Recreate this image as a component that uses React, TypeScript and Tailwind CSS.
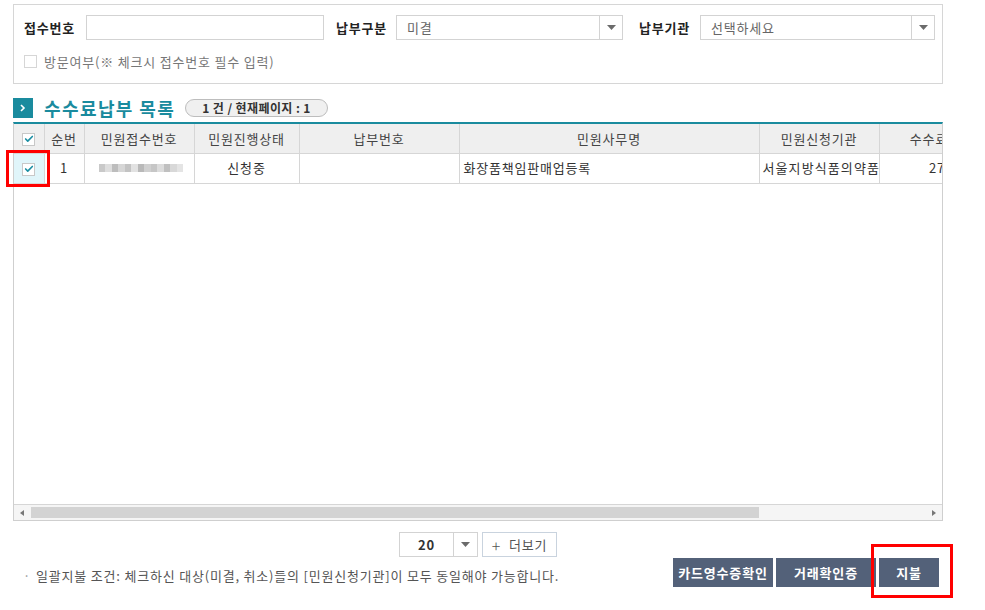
import { Check } from "lucide-react";

const font = { fontFamily: '"Noto Sans CJK KR", "Noto Sans", sans-serif' };

function Caret() {
  return (
    <svg width="9" height="5" viewBox="0 0 9 5">
      <path d="M0 0h9L4.5 5z" fill="#6b6b6b" />
    </svg>
  );
}

function SelectBox({ value, width, arrow }: { value: string; width: string; arrow: string }) {
  return (
    <div className={`flex h-[25px] ${width} border border-[#d3d3d3] bg-white`}>
      <div className="flex flex-1 items-center pl-[10px] text-[13px] text-[#666]">{value}</div>
      <div className={`flex ${arrow} items-center justify-center border-l border-[#d3d3d3]`}>
        <Caret />
      </div>
    </div>
  );
}

function CheckBox({ checked }: { checked?: boolean }) {
  return (
    <span className="inline-flex h-[13px] w-[13px] items-center justify-center border border-[#c8c8c8] bg-white">
      {checked && <Check size={10} strokeWidth={4} className="text-[#1b8fa3]" />}
    </span>
  );
}

function BlurredNumber() {
  const shades = ["#c9c9c9", "#dedede", "#bdbdbd", "#d6d6d6", "#c3c3c3", "#e2e2e2", "#b9b9b9", "#d0d0d0", "#c6c6c6", "#dcdcdc", "#c0c0c0", "#d8d8d8", "#e4e4e4"];
  return (
    <div className="flex h-[8px] blur-[0.6px]">
      {shades.map((c, i) => (
        <span key={i} className="h-full w-[6.5px]" style={{ background: c }} />
      ))}
    </div>
  );
}

const headers = [
  { t: "", w: "w-[30px]" },
  { t: "순번", w: "w-[40px]" },
  { t: "민원접수번호", w: "w-[110px]" },
  { t: "민원진행상태", w: "w-[105px]" },
  { t: "납부번호", w: "w-[160px]" },
  { t: "민원사무명", w: "w-[300px]" },
  { t: "민원신청기관", w: "w-[120px]" },
  { t: "수수료", w: "w-[100px]" },
  { t: "납부금액", w: "w-[110px]" },
  { t: "납부일자", w: "w-[110px]" },
];

export default function App() {
  return (
    <div className="relative h-[610px] w-[985px] overflow-hidden bg-white tracking-[0.8px] text-[#333]" style={font}>
      {/* 검색 영역 */}
      <div className="ml-[13px] mt-[4px] h-[80px] w-[930px] border border-[#d6d6d6] pl-[10px] pt-[10px]">
        <div className="flex items-center">
          <span className="w-[52px] whitespace-nowrap text-[13px] font-bold text-[#222]">접수번호</span>
          <div className="ml-[10px] h-[25px] w-[238px] border border-[#d3d3d3]" />
          <span className="ml-[12px] w-[50px] whitespace-nowrap text-[13px] font-bold text-[#222]">납부구분</span>
          <div className="ml-[10px]">
            <SelectBox value="미결" width="w-[227px]" arrow="w-[23px]" />
          </div>
          <span className="ml-[16px] w-[51px] whitespace-nowrap text-[13px] font-bold text-[#222]">납부기관</span>
          <div className="ml-[10px]">
            <SelectBox value="선택하세요" width="w-[235px]" arrow="w-[23px]" />
          </div>
        </div>
        <div className="mt-[12px] flex items-center">
          <span className="h-[13px] w-[13px] border border-[#d6d6d6] bg-white" />
          <span className="ml-[7px] text-[13px] text-[#777]">방문여부(※ 체크시 접수번호 필수 입력)</span>
        </div>
      </div>

      {/* 타이틀 */}
      <div className="ml-[13px] mt-[14px] flex items-center">
        <span className="flex h-[20px] w-[20px] items-center justify-center bg-[#1a8b9e]">
          <svg width="6" height="8" viewBox="0 0 6 8">
            <path d="M1 1l3 3-3 3" stroke="white" strokeWidth="1.6" fill="none" />
          </svg>
        </span>
        <span className="ml-[11px] text-[18px] font-bold leading-[20px] tracking-[1.4px] text-[#1a8b9e]">수수료납부 목록</span>
        <span className="ml-[10px] flex h-[18px] items-center rounded-full border border-[#bdbdbd] bg-[#f0f0f0] px-[16px] text-[12px] font-bold tracking-[0.4px] text-[#333]">
          1 건 / 현재페이지 : 1
        </span>
      </div>

      {/* 목록 */}
      <div className="ml-[13px] mt-[4px] flex h-[399px] w-[930px] flex-col border-x border-b border-[#cfcfcf] border-t-2 border-t-[#1a8b9e]">
        <div className="flex-1 overflow-hidden">
          <table className="table-fixed border-collapse text-[13px]" style={{ width: 1085 }}>
            <thead>
              <tr className="h-[29px] bg-[#efefef] text-[#444]">
                {headers.map((h, i) => (
                  <th key={i} className={`${h.w} whitespace-nowrap border-b border-r border-[#d6d6d6] font-normal`}>
                    {i === 0 ? (
                      <div className="flex justify-center pt-[2px]">
                        <CheckBox checked />
                      </div>
                    ) : (
                      h.t
                    )}
                  </th>
                ))}
              </tr>
            </thead>
            <tbody>
              <tr className="h-[30px]">
                <td className="border-b border-r border-[#d6d6d6] bg-[#e0f5fa]">
                  <div className="flex justify-center pt-[2px]">
                    <CheckBox checked />
                  </div>
                </td>
                <td className="border-b border-r border-[#d6d6d6] text-center">1</td>
                <td className="border-b border-r border-[#d6d6d6] pl-[14px]">
                  <BlurredNumber />
                </td>
                <td className="border-b border-r border-[#d6d6d6] text-center">신청중</td>
                <td className="border-b border-r border-[#d6d6d6]" />
                <td className="border-b border-r border-[#d6d6d6] pl-[4px]">화장품책임판매업등록</td>
                <td className="overflow-hidden whitespace-nowrap border-b border-r border-[#d6d6d6] pl-[3px] tracking-[1.1px]">서울지방식품의약품안전처</td>
                <td className="border-b border-r border-[#d6d6d6] pr-[5px] text-right">27,000</td>
                <td className="border-b border-r border-[#d6d6d6] pr-[5px] text-right">27,000</td>
                <td className="border-b border-r border-[#d6d6d6] text-center" />
              </tr>
            </tbody>
          </table>
        </div>
        {/* 가로 스크롤바 */}
        <div className="flex h-[16px] items-center border-t border-[#d6d6d6] bg-[#f5f5f5] px-[4px]">
          <svg width="4" height="6" viewBox="0 0 4 6" className="ml-[2px]">
            <path d="M4 0v6L0 3z" fill="#777" />
          </svg>
          <div className="ml-[7px] h-[11px] w-[728px] bg-[#d3d3d3]" />
          <div className="flex-1" />
          <svg width="4" height="6" viewBox="0 0 4 6" className="mr-[2px]">
            <path d="M0 0v6l4-3z" fill="#777" />
          </svg>
        </div>
      </div>

      {/* 하단 */}
      <div className="ml-[13px] w-[930px]">
        <div className="mt-[11px] flex justify-center">
          <div className="flex h-[25px] w-[79px] border border-[#d3d3d3]">
            <div className="flex flex-1 items-center justify-center text-[13px] font-bold text-[#333]">20</div>
            <div className="flex w-[24px] items-center justify-center border-l border-[#d3d3d3]">
              <Caret />
            </div>
          </div>
          <div className="ml-[4px] flex h-[25px] w-[75px] items-center justify-center border border-[#c9d3de] text-[13px] text-[#555]">
            <span className="mr-[8px] text-[16px] font-light leading-none">+</span>더보기
          </div>
        </div>
        <div className="mt-[1px] flex items-start justify-between pr-[4px]">
          <span className="mt-[8px] pl-[10px] text-[13px] text-[#555]">
            <span className="mr-[5px] text-[#999]">·</span>일괄지불 조건: 체크하신 대상(미결, 취소)들의 [민원신청기관]이 모두 동일해야 가능합니다.
          </span>
          <div className="flex gap-[3px]">
            <button className="h-[29px] w-[100px] bg-[#536179] text-[13px] font-bold text-white">카드영수증확인</button>
            <button className="h-[29px] w-[100px] bg-[#536179] text-[13px] font-bold text-white">거래확인증</button>
            <button className="h-[29px] w-[60px] bg-[#536179] text-[13px] font-bold text-white">지불</button>
          </div>
        </div>
      </div>

      {/* 강조 표시 */}
      <div className="absolute left-[6px] top-[150px] h-[37px] w-[44px] border-[3px] border-[#ff0000]" />
      <div className="absolute left-[871px] top-[544px] h-[54px] w-[82px] border-[3px] border-[#ff0000]" />
    </div>
  );
}
